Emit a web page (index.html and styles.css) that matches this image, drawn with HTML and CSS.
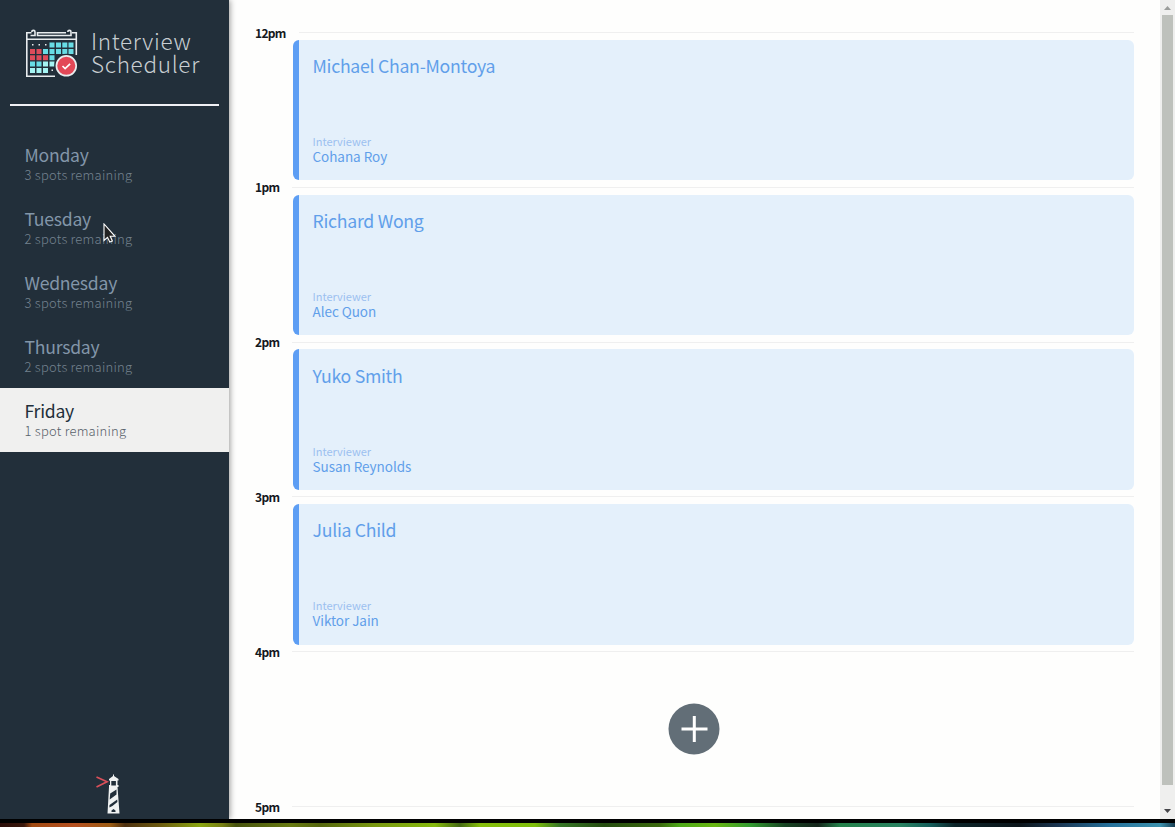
FILE: index.html
```html
<!DOCTYPE html>
<html lang="en">
<head>
<meta charset="utf-8">
<title>Interview Scheduler</title>
<link rel="stylesheet" href="styles.css">
</head>
<body>
<div class="app">
  <aside class="sidebar">
    <header class="logo">
      <svg class="calendar" width="54" height="52" viewBox="0 0 54 52">
        <g fill="none" stroke="#e8ecee" stroke-width="1.6">
          <path d="M51.3 27V4.8H47M41 4.8H13M6.500 4.8H1.800V48.200H30"/>
          <path d="M2 11.300H51"/>
          <path d="M5.500 7.500H10V4a1.600 1.600 0 0 0-3.200 0M12.500 4v3.500H41M41 7.500H46V4a1.600 1.600 0 0 0-3.200 0"/>
        </g>
        <g fill="#e8ecee"><path d="M7 16h1.500v1.500H7zM13.500 16H15v1.500h-1.500zM20 16h1.500v1.500H20zM26.500 41.500H28V43h-1.500z"/></g>
        <g fill="#68dde5"><path d="M24.500 14.500h5v5h-5zM31 14.500h5v5h-5zM37.300 14.500h5v5h-5zM43.500 14.500h5v5h-5zM18 21h5v5h-5zM24.500 21h5v5h-5zM31 21h5v5h-5zM37.300 21h5v5h-5zM43.500 21h5v5h-5zM24.500 27.200h5v5h-5zM5 33.500h5v5H5zM11.500 33.500h5v5h-5z"/></g>
        <g fill="#dd4b5a"><path d="M5 21h5v5H5zM11.500 21h5v5h-5zM5 27.200h5v5H5zM11.500 27.200h5v5h-5zM18 27.200h5v5h-5z"/></g>
        <g fill="#a5f4f3"><path d="M18 33.500h5v5h-5zM24.500 33.500h5v5h-5zM5 40h5v5H5zM11.500 40h5v5h-5zM18 40h5v5h-5z"/></g>
        <circle cx="41.300" cy="37.800" r="12" fill="#222f3a"/>
        <circle cx="41.300" cy="37.800" r="9.900" fill="#e34857" stroke="#e8ecee" stroke-width="1.700"/>
        <path d="M37.500 38l2.600 2.600 5-4.800" fill="none" stroke="#fff" stroke-width="1.700"/>
      </svg>
      <div class="wordmark"><span class="word-top">Interview</span><span class="word-bottom">Scheduler</span></div>
    </header>
    <hr class="rule">
    <ul class="days">
      <li class="day"><span class="day-name">Monday</span><span class="spots">3 spots remaining</span></li>
      <li class="day"><span class="day-name">Tuesday</span><span class="spots">2 spots remaining</span></li>
      <li class="day"><span class="day-name">Wednesday</span><span class="spots">3 spots remaining</span></li>
      <li class="day"><span class="day-name">Thursday</span><span class="spots">2 spots remaining</span></li>
      <li class="day selected"><span class="day-name">Friday</span><span class="spots">1 spot remaining</span></li>
    </ul>
    <svg class="lighthouse" width="26" height="42" viewBox="0 0 26 42">
      <path d="M1.500 4l10.500 4.800L1.500 14" fill="none" stroke="#d9505a" stroke-width="1.700"/>
      <path fill="#f0f2f2" d="M14 6l4-3V1.500h1V3l4.500 3v1.500h-1V12h1v2h-1l2 26.500H12.500l1.500-26.500v-2h1V7.500h-1z"/>
      <path fill="#222f3a" d="M16.300 8h4.600v4.500h-4.600zM15.200 20.500l6.300-4v5l-6.800 5zM14.500 32l7.700-5.500.2 2.500-5 4-3 1.500zM16.500 39v-1.500l2-1.500 2 1.500V39z"/>
    </svg>
  </aside>
  <main class="schedule">
    <section class="slot first"><h4 class="time">12pm</h4><div class="slot-body">
      <article class="card"><h2 class="student">Michael Chan-Montoya</h2><h4 class="label">Interviewer</h4><h3 class="interviewer">Cohana Roy</h3></article></div></section>
    <section class="slot"><h4 class="time">1pm</h4><div class="slot-body">
      <article class="card"><h2 class="student">Richard Wong</h2><h4 class="label">Interviewer</h4><h3 class="interviewer">Alec Quon</h3></article></div></section>
    <section class="slot"><h4 class="time">2pm</h4><div class="slot-body">
      <article class="card"><h2 class="student">Yuko Smith</h2><h4 class="label">Interviewer</h4><h3 class="interviewer">Susan Reynolds</h3></article></div></section>
    <section class="slot"><h4 class="time">3pm</h4><div class="slot-body">
      <article class="card"><h2 class="student">Julia Child</h2><h4 class="label">Interviewer</h4><h3 class="interviewer">Viktor Jain</h3></article></div></section>
    <section class="slot"><h4 class="time">4pm</h4><div class="slot-body empty">
      <svg class="add" width="52" height="52" viewBox="0 0 52 52"><circle cx="26" cy="26" r="25.500" fill="#626e77"/><path d="M13.500 26h26M26.300 13v26" stroke="#fff" stroke-width="3"/></svg></div></section>
    <section class="slot"><h4 class="time">5pm</h4><div class="slot-body"></div></section>
  </main>
  <div class="scrollbar">
    <svg width="15" height="15" viewBox="0 0 15 15"><path d="M4 10l3.500-4 3.500 4z" fill="#9b9d9b"/></svg>
    <div class="thumb"></div>
    <svg class="down" width="15" height="15" viewBox="0 0 15 15"><path d="M4 5l3.500 4L11 5z" fill="#454549"/></svg>
  </div>
</div>
<div class="desktop"></div>
<svg class="cursor" width="14" height="20" viewBox="0 0 14 20"><path d="M1 1v16.500l3.500-3.200 2.300 4.800 2.600-1.200-2.200-4.600H12z" fill="#222" stroke="#fff" stroke-width="1.100"/></svg>
</body>
</html>
```
FILE: styles.css
```css
* { box-sizing: border-box; }
body { margin: 0; height: 827px; overflow: hidden; background: #000; font-family: "Source Sans Pro", "Noto Sans CJK JP", "Noto Sans", sans-serif; }
h2, h3, h4, ul { margin: 0; padding: 0; font-weight: 400; }
.app { display: flex; height: 819px; background: #fefefd; overflow: hidden; }
.sidebar { width: 229px; flex: none; display: flex; flex-direction: column; background: #222f3a; box-shadow: 1px 0 6px rgba(0,0,0,.4); }
.logo { display: flex; height: 104px; padding: 28px 0 0 25px; color: #c8ced2; }
.calendar { flex: none; }
.wordmark { padding: 1px 0 0 12px; font-size: 22.5px; font-weight: 300; line-height: 23px; }
.wordmark span { display: block; }
.word-top { letter-spacing: .65px; }
.word-bottom { letter-spacing: .7px; }
.rule { flex: none; width: 209px; height: 2px; margin: 0 10px; border: 0; background: #f0f0f4; }
.days { margin-top: 26px; list-style: none; }
.day { height: 64px; padding: 12px 0 0 24.5px; color: #8296a9; }
.day-name { display: block; font-size: 17.6px; line-height: 22px; letter-spacing: -.25px; }
.spots { display: block; font-size: 13px; font-weight: 300; line-height: 18px; letter-spacing: .23px; color: #74828f; }
.selected { background: #f0f0ef; color: #222f3a; }
.selected .spots { color: #57616a; }
.lighthouse { margin: auto 0 4px 95px; }
.schedule { flex: 1; padding: 32px 26px 0 26px; }
.slot { display: flex; height: 154.8px; }
.time { width: 37px; flex: none; margin-top: -8.4px; font-size: 12px; font-weight: 700; line-height: 17px; letter-spacing: -.7px; color: #15191d; }
.slot-body { flex: 1; padding: 7.8px 0 6px 1px; background: linear-gradient(#efefef, #efefef) 0 0 / 100% 1px no-repeat; }
.first .slot-body { background-position: 7px 0; }
.card { height: 140.4px; padding: 13.2px 0 0 13.5px; border-left: 6px solid #5d9ef4; border-radius: 6px; background: #e4f0fb; color: #619fea; }
.student { font-size: 17.7px; line-height: 24px; letter-spacing: -.28px; }
.label { margin-top: 56px; font-size: 11px; line-height: 16px; color: #9cc0f0; }
.interviewer { font-size: 13.5px; line-height: 14px; letter-spacing: -.04px; }
.empty { display: flex; justify-content: center; align-items: center; padding-right: 38.5px; padding-top: 7px; }
.scrollbar { width: 15px; display: flex; flex-direction: column; background: #efefee; }
.scrollbar svg { display: block; flex: none; }
.thumb { width: 11px; height: 770px; margin: 0 2px; background: #bec1bc; }
.down { margin-top: auto; }
.desktop { height: 8px; border-top: 4px solid #000; background: linear-gradient(90deg, #2a0d08 0, #3a180c 24px, #a04a12 32px, #b55020 75px, #9c5c14 110px, #4d3010 125px, #6c5a10 160px, #8aa511 200px, #777f13 222px, #46520e 236px, #687a12 290px, #55660e 320px, #799710 375px, #86b90e 435px, #446914 460px, #86bd0b 480px, #7fbe0b 535px, #367627 560px, #254c10 604px, #3b690e 660px, #4da819 680px, #69b512 715px, #329a31 750px, #174323 785px, #15251b 818px, #24804a 840px, #298261 900px, #155e5b 930px, #0c2429 955px, #0c151b 1020px, #1b3754 1060px, #25709a 1110px, #3c91ad 1160px, #173c50 1175px); }
.cursor { position: absolute; left: 103px; top: 223px; }
```
